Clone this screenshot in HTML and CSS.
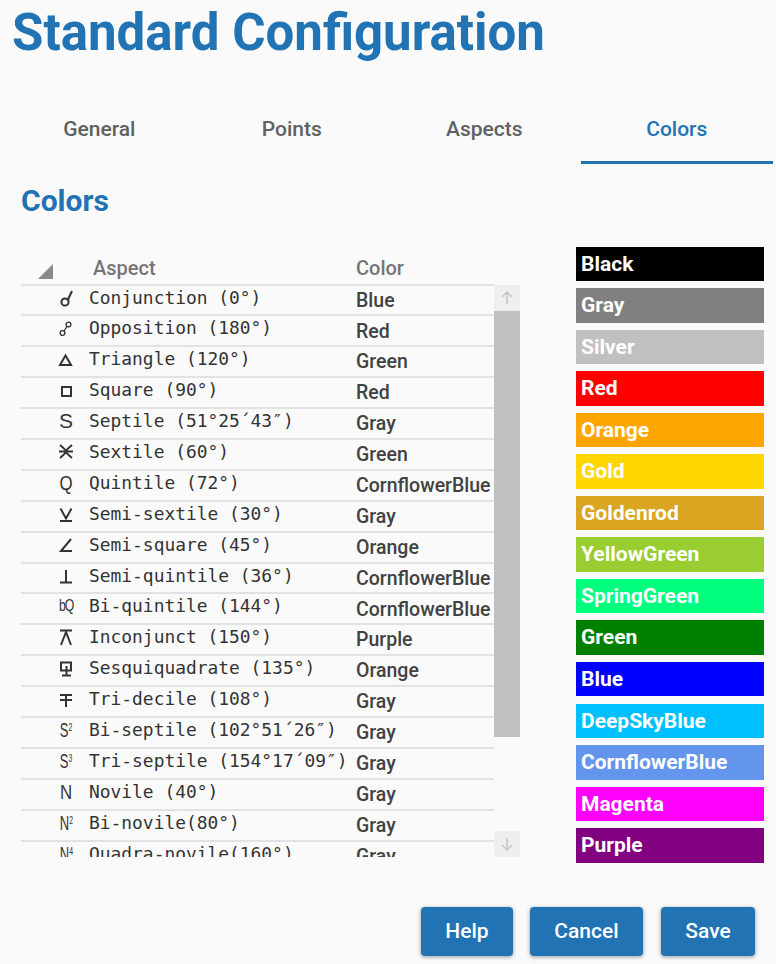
FILE: index.html
```html
<!DOCTYPE html>
<html>
	<head>
		<meta charset="utf-8" />
		<title>Standard Configuration</title>
		<link rel="stylesheet" href="styles.css">
	</head>
	<body>
		<h1 class="title">Standard Configuration</h1>
		<div class="tabs">
			<a class="tab">General</a>
			<a class="tab">Points</a>
			<a class="tab">Aspects</a>
			<a class="tab active">Colors</a>
		</div>
		<h2 class="heading">Colors</h2>
		<div class="content">
			<div class="tableBox">
				<div class="head">
					<span class="corner"></span>
					<span class="headAspect">Aspect</span>
					<span class="headColor">Color</span>
				</div>
				<div class="scrollArea">
					<div class="rows">
						<div class="row"><svg class="sym" viewBox="0 0 20 20"><circle cx="9" cy="14" r="3.6"/><path d="M11.5 12.5 L16 3"/></svg><span class="name">Conjunction (0°)</span><span class="val">Blue</span></div>
						<div class="row"><svg class="sym thin" viewBox="0 0 20 20"><circle cx="6.5" cy="15" r="2.4"/><circle cx="12.5" cy="6.5" r="2.4"/><path d="M8 13 L11 8.5"/></svg><span class="name">Opposition (180°)</span><span class="val">Red</span></div>
						<div class="row"><svg class="sym" viewBox="0 0 20 20"><path d="M9.5 6.5 L4 16 H15 Z"/></svg><span class="name">Triangle (120°)</span><span class="val">Green</span></div>
						<div class="row"><svg class="sym" viewBox="0 0 20 20"><rect x="6" y="7" width="9" height="9"/></svg><span class="name">Square (90°)</span><span class="val">Red</span></div>
						<div class="row"><span class="txtSym big wide">S</span><span class="name">Septile (51°25´43″)</span><span class="val">Gray</span></div>
						<div class="row"><svg class="sym" viewBox="0 0 20 20"><path d="M3 9.5 H17 M4 3 Q10 8 10 9.5 Q10 8 16 3 M4 16 Q10 11 10 9.5 Q10 11 16 16"/></svg><span class="name">Sextile (60°)</span><span class="val">Green</span></div>
						<div class="row"><span class="txtSym big">Q</span><span class="name">Quintile (72°)</span><span class="val">CornflowerBlue</span></div>
						<div class="row"><svg class="sym" viewBox="0 0 20 20"><path d="M4.5 4.5 L10 14.5 L15.5 4.5 M4 17 H16"/></svg><span class="name">Semi-sextile (30°)</span><span class="val">Gray</span></div>
						<div class="row"><svg class="sym" viewBox="0 0 20 20"><path d="M15 4 L5 16 H16"/></svg><span class="name">Semi-square (45°)</span><span class="val">Orange</span></div>
						<div class="row"><svg class="sym" viewBox="0 0 20 20"><path d="M10 4 V16.5 M4 16.5 H16"/></svg><span class="name">Semi-quintile (36°)</span><span class="val">CornflowerBlue</span></div>
						<div class="row"><span class="txtSym tight">bQ</span><span class="name">Bi-quintile (144°)</span><span class="val">CornflowerBlue</span></div>
						<div class="row"><svg class="sym" viewBox="0 0 20 20"><path d="M4 3.5 H16 M5 18 L10 5 L15 18"/></svg><span class="name">Inconjunct (150°)</span><span class="val">Purple</span></div>
						<div class="row"><svg class="sym" viewBox="0 0 20 20"><path d="M5 4.5 H15 V12.5 H5 Z M10.5 8 V17.5 M6 17.5 H15"/></svg><span class="name">Sesquiquadrate (135°)</span><span class="val">Orange</span></div>
						<div class="row"><svg class="sym" viewBox="0 0 20 20"><path d="M4 6 H16 M4 11 H16 M10 6 V18"/></svg><span class="name">Tri-decile (108°)</span><span class="val">Gray</span></div>
						<div class="row"><span class="txtSym narrow">S<sup>2</sup></span><span class="name">Bi-septile (102°51´26″)</span><span class="val">Gray</span></div>
						<div class="row"><span class="txtSym narrow">S<sup>3</sup></span><span class="name">Tri-septile (154°17´09″)</span><span class="val">Gray</span></div>
						<div class="row"><span class="txtSym big">N</span><span class="name">Novile (40°)</span><span class="val">Gray</span></div>
						<div class="row"><span class="txtSym narrow">N<sup>2</sup></span><span class="name">Bi-novile(80°)</span><span class="val">Gray</span></div>
						<div class="row"><span class="txtSym narrow">N<sup>4</sup></span><span class="name">Quadra-novile(160°)</span><span class="val">Gray</span></div>
					</div>
					<div class="scrollbar">
						<div class="arrow"><svg viewBox="0 0 26 26"><path d="M13 19 V7 M8 12 L13 7 L18 12"/></svg></div>
						<div class="thumb"></div>
						<div class="track"></div>
						<div class="arrow"><svg viewBox="0 0 26 26"><path d="M13 7 V19 M8 14 L13 19 L18 14"/></svg></div>
					</div>
				</div>
			</div>
			<div class="swatches">
				<div class="swatch black">Black</div>
				<div class="swatch gray">Gray</div>
				<div class="swatch silver">Silver</div>
				<div class="swatch red">Red</div>
				<div class="swatch orange">Orange</div>
				<div class="swatch gold">Gold</div>
				<div class="swatch goldenrod">Goldenrod</div>
				<div class="swatch yellowgreen">YellowGreen</div>
				<div class="swatch springgreen">SpringGreen</div>
				<div class="swatch green">Green</div>
				<div class="swatch blue">Blue</div>
				<div class="swatch deepskyblue">DeepSkyBlue</div>
				<div class="swatch cornflowerblue">CornflowerBlue</div>
				<div class="swatch magenta">Magenta</div>
				<div class="swatch purple">Purple</div>
			</div>
		</div>
		<div class="buttons">
			<button class="btn help">Help</button>
			<button class="btn cancel">Cancel</button>
			<button class="btn save">Save</button>
		</div>
	</body>
</html>
```

FILE: styles.css
```css
*{margin: 0;padding: 0;box-sizing: border-box;}
html,body{height: 100%;}
body{background-color: #fafafa;
	font-family: Roboto, "Liberation Sans", sans-serif;
	overflow: hidden;
}
.title{font-size: 51px;font-weight: 700;line-height: 56px;
	color: #2173b3;
	padding: 5px 0 0 12px;
}
.tabs{display: flex;
	margin: 37px 3px 0 3px;
}
.tab{flex: 1;
	height: 66px;
	padding-top: 18px;
	text-align: center;
	font-size: 21px;font-weight: 500;line-height: 26px;
	color: #616161;
	border-bottom: 2px solid transparent;
}
.tab.active{color: #2173b3;
	border-bottom: 3px solid #2173b3;
}
.heading{font-size: 30px;font-weight: 700;line-height: 36px;
	color: #2173b3;
	padding: 19px 0 0 21px;
}
.content{display: flex;
	padding: 27px 0 0 21px;
}
.tableBox{width: 499px;
	padding-top: 8px;
}
.head{display: flex;align-items: center;
	height: 29.5px;
	width: 473px;
	padding-bottom: 2px;
	font-size: 20px;font-weight: 500;
	color: #757575;
}
.corner{width: 0;height: 0;
	margin: 7px 0 0 17px;
	border-style: solid;
	border-width: 0 0 15px 15px;
	border-color: transparent transparent #8a8a8a transparent;
}
.headAspect{margin-left: 40px;width: 263px;}
.scrollArea{display: flex;
	height: 573px;
	overflow: hidden;
}
.rows{width: 473px;flex: none;}
.row{display: flex;
	height: 30.9px;
	border-top: 2px solid #e2e2e2;
	color: #424242;
}
.sym{width: 20px;height: 20px;flex: none;
	margin: 2px 0 0 35px;
	fill: none;
	stroke: #333;
	stroke-width: 2;
}
.sym.thin{stroke-width: 1.3;}
.txtSym{width: 20px;flex: none;
	margin-left: 35px;
	font-family: "Liberation Sans", sans-serif;
	font-size: 21px;line-height: 24px;
	text-align: center;
	color: #333;
	white-space: nowrap;
	transform: scaleX(0.8);
}
.txtSym.wide{transform: none;}
.txtSym.narrow{transform: scaleX(0.62);}
.txtSym.tight{font-size: 17px;letter-spacing: -1.5px;transform: scaleX(0.72);}
.txtSym sup{font-size: 11px;line-height: 0;vertical-align: 6px;}
.name{width: 267px;flex: none;
	margin-left: 13px;
	font-family: "DejaVu Sans Mono", monospace;
	font-size: 17.9px;line-height: 24px;
	color: #333;
	white-space: nowrap;
}
.val{padding-top: 3.2px;
	font-size: 19.5px;font-weight: 500;line-height: 24px;
	white-space: nowrap;
}
.scrollbar{width: 26px;flex: none;
	margin-top: 1px;
	display: flex;flex-direction: column;
}
.arrow{height: 26px;background-color: #efefef;}
.arrow svg{display: block;width: 26px;height: 26px;
	fill: none;
	stroke: #c4c4c4;
	stroke-width: 1.5;
}
.thumb{height: 426px;background-color: #c0c0c0;}
.track{flex: 1;}
.swatches{display: flex;flex-direction: column;
	gap: 7.05px;
	width: 188px;
	margin-left: 56px;
	padding-top: 0.5px;
}
.swatch{height: 34.5px;
	padding-left: 5px;
	font-size: 21px;font-weight: 700;line-height: 34.5px;
	color: #fff;
}
.black{background-color: black;}
.gray{background-color: gray;}
.silver{background-color: silver;}
.red{background-color: red;}
.orange{background-color: orange;}
.gold{background-color: gold;}
.goldenrod{background-color: goldenrod;}
.yellowgreen{background-color: yellowgreen;}
.springgreen{background-color: springgreen;}
.green{background-color: green;}
.blue{background-color: blue;}
.deepskyblue{background-color: deepskyblue;}
.cornflowerblue{background-color: cornflowerblue;}
.magenta{background-color: magenta;}
.purple{background-color: purple;}
.buttons{display: flex;
	padding: 44px 0 0 421px;
}
.btn{height: 49px;
	border: none;
	border-radius: 4px;
	background-color: #2173b3;
	color: #fff;
	font-family: inherit;
	font-size: 21px;font-weight: 500;
	box-shadow: 0 1px 4px rgba(0,0,0,0.4);
}
.help{width: 92px;}
.cancel{width: 113px;margin-left: 17px;}
.save{width: 94px;margin-left: 18px;}
```
